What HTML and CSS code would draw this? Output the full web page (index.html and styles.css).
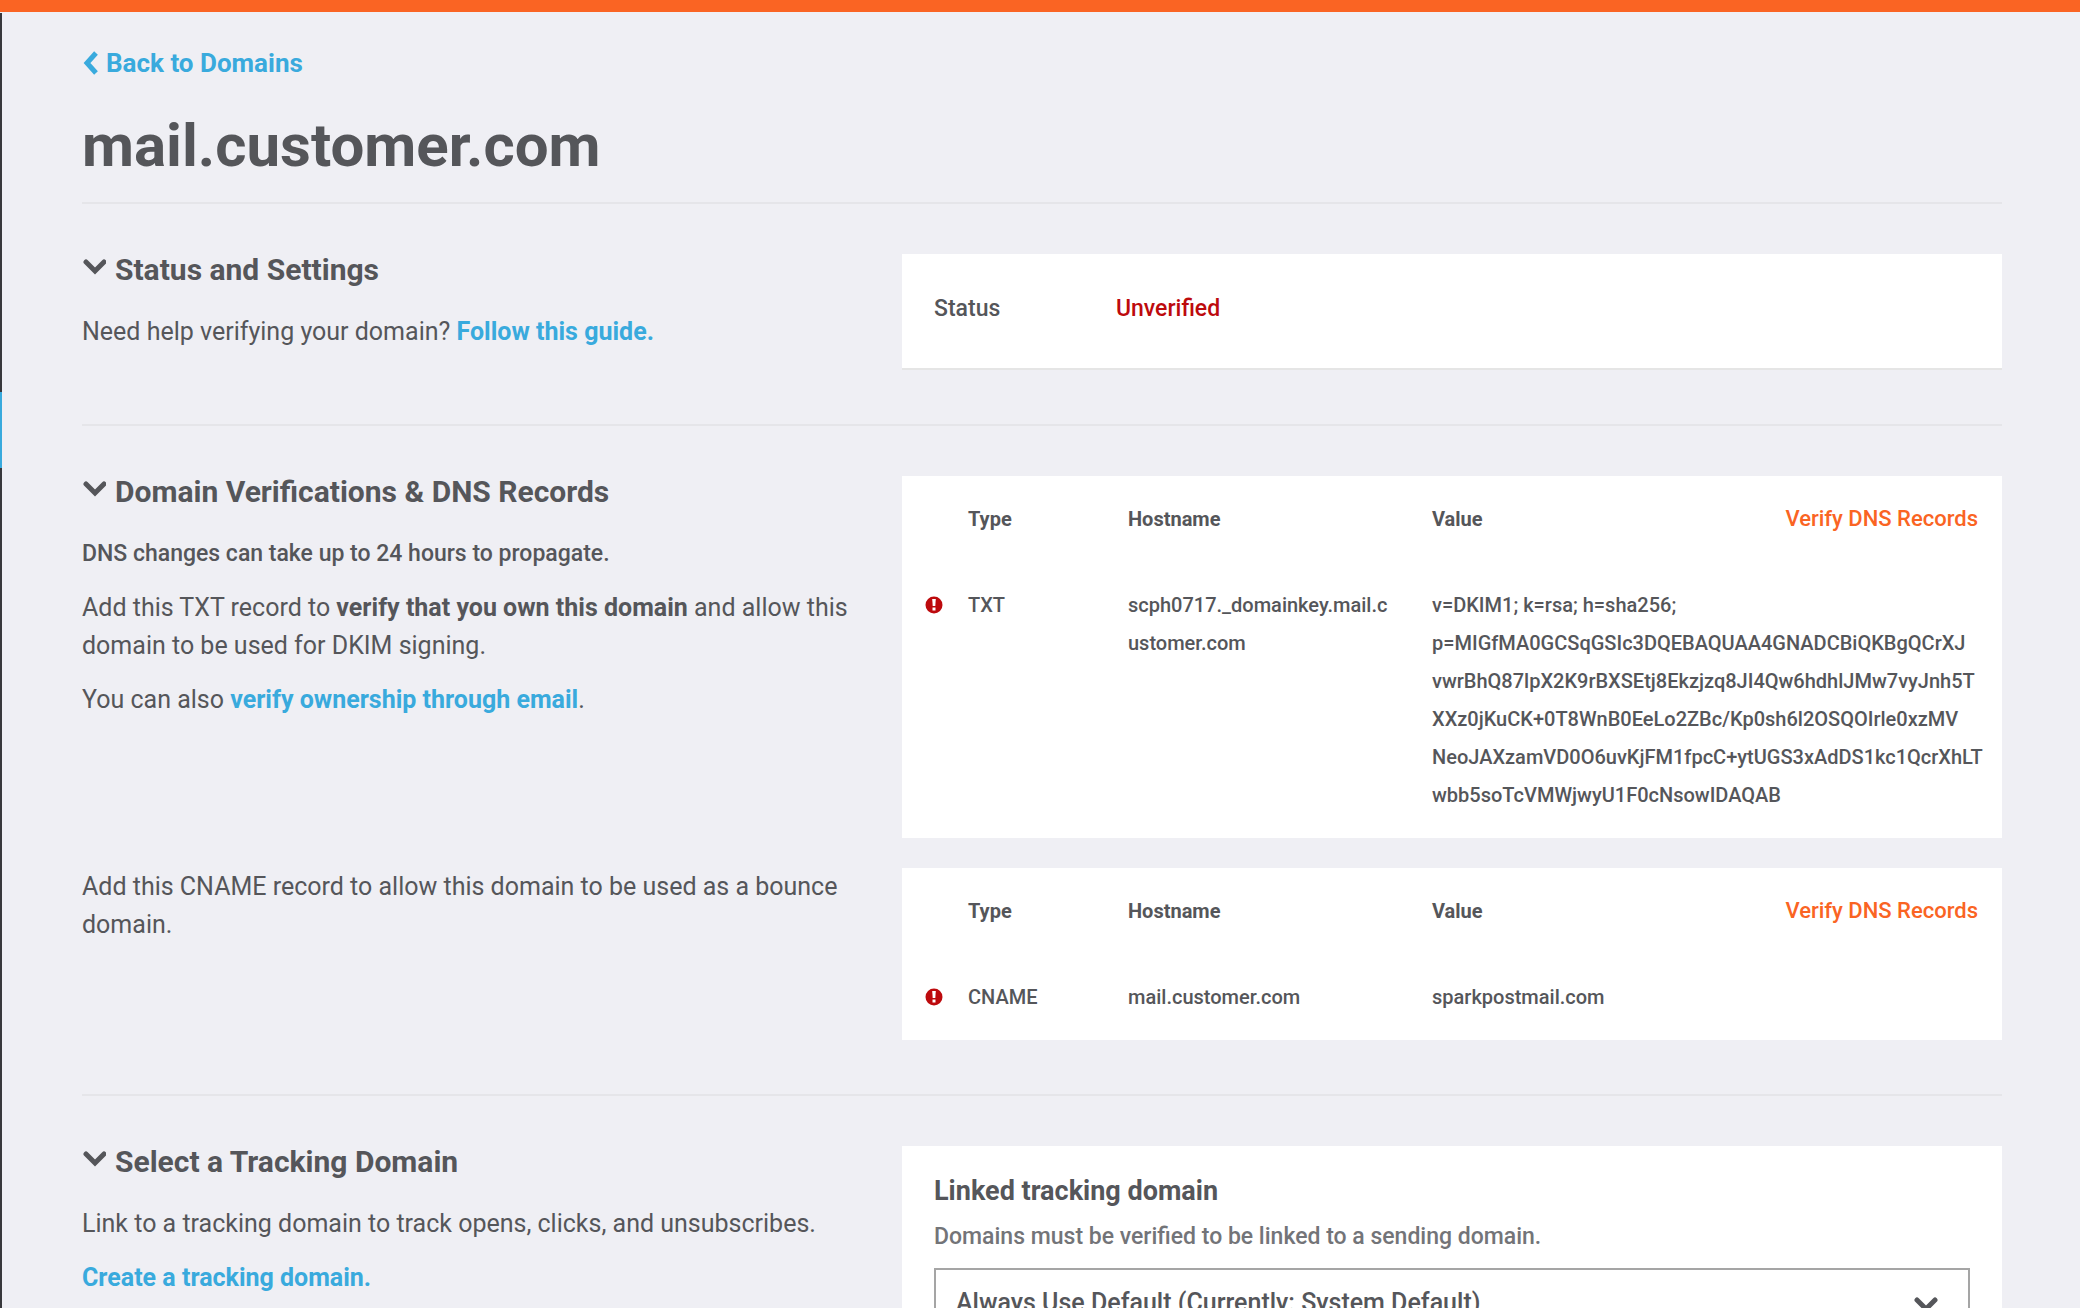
FILE: index.html
```html
<!DOCTYPE html>
<html lang="en">
<head>
<meta charset="utf-8">
<meta name="viewport" content="width=device-width, initial-scale=1">
<title>mail.customer.com</title>
<link rel="stylesheet" href="styles.css">
</head>
<body>
<div class="topbar"></div>
<div class="shell">
  <div class="rail"><div class="rail-current"></div></div>
  <main class="page">
    <header class="page-header">
      <a class="back" href="#domains"><svg class="back-icon" viewBox="0 0 16 24" aria-hidden="true"><path d="M14 2 5 12l9 10"/></svg>Back to Domains</a>
      <h1 class="title">mail.customer.com</h1>
    </header>

    <section class="section">
      <div class="intro">
        <h2 class="heading"><button class="toggle" type="button" aria-expanded="true"><svg class="chevron" viewBox="0 0 24 24" aria-hidden="true"><path d="m4 4 9 9 9-9"/></svg>Status and Settings</button></h2>
        <p class="text">Need help verifying your domain? <a href="#guide">Follow this guide.</a></p>
      </div>
      <div class="panel">
        <dl class="card status-card">
          <dt>Status</dt>
          <dd>Unverified</dd>
        </dl>
      </div>
    </section>

    <section class="section">
      <div class="intro">
        <h2 class="heading"><button class="toggle" type="button" aria-expanded="true"><svg class="chevron" viewBox="0 0 24 24" aria-hidden="true"><path d="m4 4 9 9 9-9"/></svg>Domain Verifications &amp; DNS Records</button></h2>
        <p class="text note">DNS changes can take up to 24 hours to propagate.</p>
        <p class="text">Add this TXT record to <strong>verify that you own this domain</strong> and allow this domain to be used for DKIM signing.</p>
        <p class="text">You can also <a href="#email">verify ownership through email</a>.</p>
      </div>
      <div class="panel">
        <div class="card">
          <table class="records">
            <thead>
              <tr>
                <th class="col-icon"></th>
                <th class="col-type">Type</th>
                <th class="col-host">Hostname</th>
                <th>Value</th>
                <th class="col-action"><button class="verify" type="button">Verify DNS Records</button></th>
              </tr>
            </thead>
            <tbody>
              <tr>
                <td class="col-icon"><svg class="alert" viewBox="0 0 18 18" role="img" aria-label="Unverified"><circle cx="9" cy="9" r="8.5" fill="#bd0a0d"/><path d="M7.2 3h3.6l-.5 7H7.700z" fill="#fff"/><path d="M7.500 11.500h3v3h-3z" fill="#fff"/></svg></td>
                <td>TXT</td>
                <td>scph0717._domainkey.mail.c<wbr>ustomer.com</td>
                <td class="value" colspan="2">v=DKIM1; k=rsa; h=sha256;<br>p=MIGfMA0GCSqGSIc3DQEBAQUAA4GNADCBiQKBgQCrXJ<br>vwrBhQ87lpX2K9rBXSEtj8Ekzjzq8JI4Qw6hdhlJMw7vyJnh5T<br>XXz0jKuCK+0T8WnB0EeLo2ZBc/Kp0sh6l2OSQOIrle0xzMV<br>NeoJAXzamVD0O6uvKjFM1fpcC+ytUGS3xAdDS1kc1QcrXhLT<br>wbb5soTcVMWjwyU1F0cNsowIDAQAB</td>
              </tr>
            </tbody>
          </table>
        </div>
      </div>
      <div class="intro">
        <p class="text">Add this CNAME record to allow this domain to be used as a bounce domain.</p>
      </div>
      <div class="card">
        <table class="records">
          <thead>
            <tr>
              <th class="col-icon"></th>
              <th class="col-type">Type</th>
              <th class="col-host">Hostname</th>
              <th>Value</th>
              <th class="col-action"><button class="verify" type="button">Verify DNS Records</button></th>
            </tr>
          </thead>
          <tbody>
            <tr>
              <td class="col-icon"><svg class="alert" viewBox="0 0 18 18" role="img" aria-label="Unverified"><circle cx="9" cy="9" r="8.5" fill="#bd0a0d"/><path d="M7.2 3h3.6l-.5 7H7.700z" fill="#fff"/><path d="M7.500 11.500h3v3h-3z" fill="#fff"/></svg></td>
              <td>CNAME</td>
              <td>mail.customer.com</td>
              <td colspan="2">sparkpostmail.com</td>
            </tr>
          </tbody>
        </table>
      </div>
    </section>

    <section class="section">
      <div class="intro">
        <h2 class="heading"><button class="toggle" type="button" aria-expanded="true"><svg class="chevron" viewBox="0 0 24 24" aria-hidden="true"><path d="m4 4 9 9 9-9"/></svg>Select a Tracking Domain</button></h2>
        <p class="text">Link to a tracking domain to track opens, clicks, and unsubscribes.</p>
        <p class="text"><a href="#create">Create a tracking domain.</a></p>
      </div>
      <div class="panel">
        <div class="card tracking-card">
          <label class="field-label" for="tracking">Linked tracking domain</label>
          <p class="field-help" id="tracking-help">Domains must be verified to be linked to a sending domain.</p>
          <div class="select-wrap">
            <select class="select" id="tracking" aria-describedby="tracking-help">
              <option>Always Use Default (Currently: System Default)</option>
            </select>
            <svg class="chevron select-icon" viewBox="0 0 24 24" aria-hidden="true"><path d="m3 4 9 9 9-9"/></svg>
          </div>
        </div>
      </div>
    </section>
  </main>
</div>
</body>
</html>
```
FILE: styles.css
```css
* { box-sizing: border-box; }

body {
  margin: 0;
  min-height: 100vh;
  display: flex;
  flex-direction: column;
  background: #efeff4;
  color: #55565a;
  font-family: Roboto, "Liberation Sans", sans-serif;
  font-size: 25px;
  line-height: 38px;
}

h1, h2, p, dl, dd { margin: 0; }

button {
  padding: 0;
  border: 0;
  background: none;
  color: inherit;
  font: inherit;
  cursor: pointer;
}

a { color: #39aadd; font-weight: 700; text-decoration: none; }
strong { font-weight: 700; }

.topbar { height: 12px; background: #fa6423; }

.shell { flex: 1; display: flex; }

.rail { flex: none; width: 2px; margin-top: 1px; padding-top: 379px; background: #38383c; }
.rail-current { height: 76px; background: #39aadd; }

.page { flex: 1; min-width: 0; padding: 32px 78px 0 80px; }

.page-header { padding-bottom: 20px; border-bottom: 2px solid #e5e5e9; }

.back { display: flex; align-items: center; gap: 8px; width: fit-content; font-size: 26px; }
.back-icon { width: 16px; height: 24px; fill: none; stroke: currentColor; stroke-width: 5; }

.title { margin-top: 28px; font-size: 60px; line-height: 72px; font-weight: 700; }

.section {
  display: grid;
  grid-template-columns: minmax(0, 82fr) minmax(0, 110fr);
  row-gap: 30px;
  padding: 47px 0 54px;
  border-bottom: 2px solid #e5e5e9;
}
.section:last-child { border-bottom: 0; }

.intro { padding-right: 48px; }
.panel { padding-top: 3px; }

.heading { margin-bottom: 24px; font-size: 30px; font-weight: 700; line-height: 38px; }
.toggle { display: flex; align-items: center; gap: 9px; }
.chevron { width: 24px; height: 24px; fill: none; stroke: currentColor; stroke-width: 5; stroke-linecap: round; }

.text + .text { margin-top: 16px; }
.note { font-size: 23px; font-weight: 500; }

.card { background: #fff; }

.status-card {
  display: grid;
  grid-template-columns: 182px 1fr;
  padding: 36px 32px 40px;
  border-bottom: 2px solid #e5e5e5;
  font-size: 23px;
  font-weight: 500;
}
.status-card dd { color: #bd0a0d; }

.records {
  width: 100%;
  table-layout: fixed;
  border-collapse: collapse;
  font-size: 20px;
  font-weight: 500;
}
.records th, .records td { padding: 24px 0; text-align: left; vertical-align: top; }
.records th { font-weight: 700; }
.records .col-icon { width: 66px; padding-left: 23px; }
.col-type { width: 160px; }
.col-host { width: 304px; }
.records .col-action { width: 320px; padding-right: 24px; text-align: right; }
.value { white-space: nowrap; }
.alert { display: block; width: 18px; height: 18px; margin-top: 10px; }
.verify { display: block; margin-left: auto; color: #fa6423; font-size: 22px; font-weight: 500; }

.tracking-card { padding: 26px 32px 32px; }
.field-label { display: block; font-size: 27px; font-weight: 700; }
.field-help { margin: 8px 0 12px; color: #737478; font-size: 23px; font-weight: 500; }

.select-wrap { position: relative; }
.select {
  appearance: none;
  display: block;
  width: 100%;
  height: 70px;
  padding: 0 64px 0 20px;
  border: 2px solid #a5a5a5;
  border-radius: 0;
  background: #fff;
  color: inherit;
  font: inherit;
  font-weight: 500;
}
.select-icon { position: absolute; top: 28px; right: 32px; pointer-events: none; }
```
